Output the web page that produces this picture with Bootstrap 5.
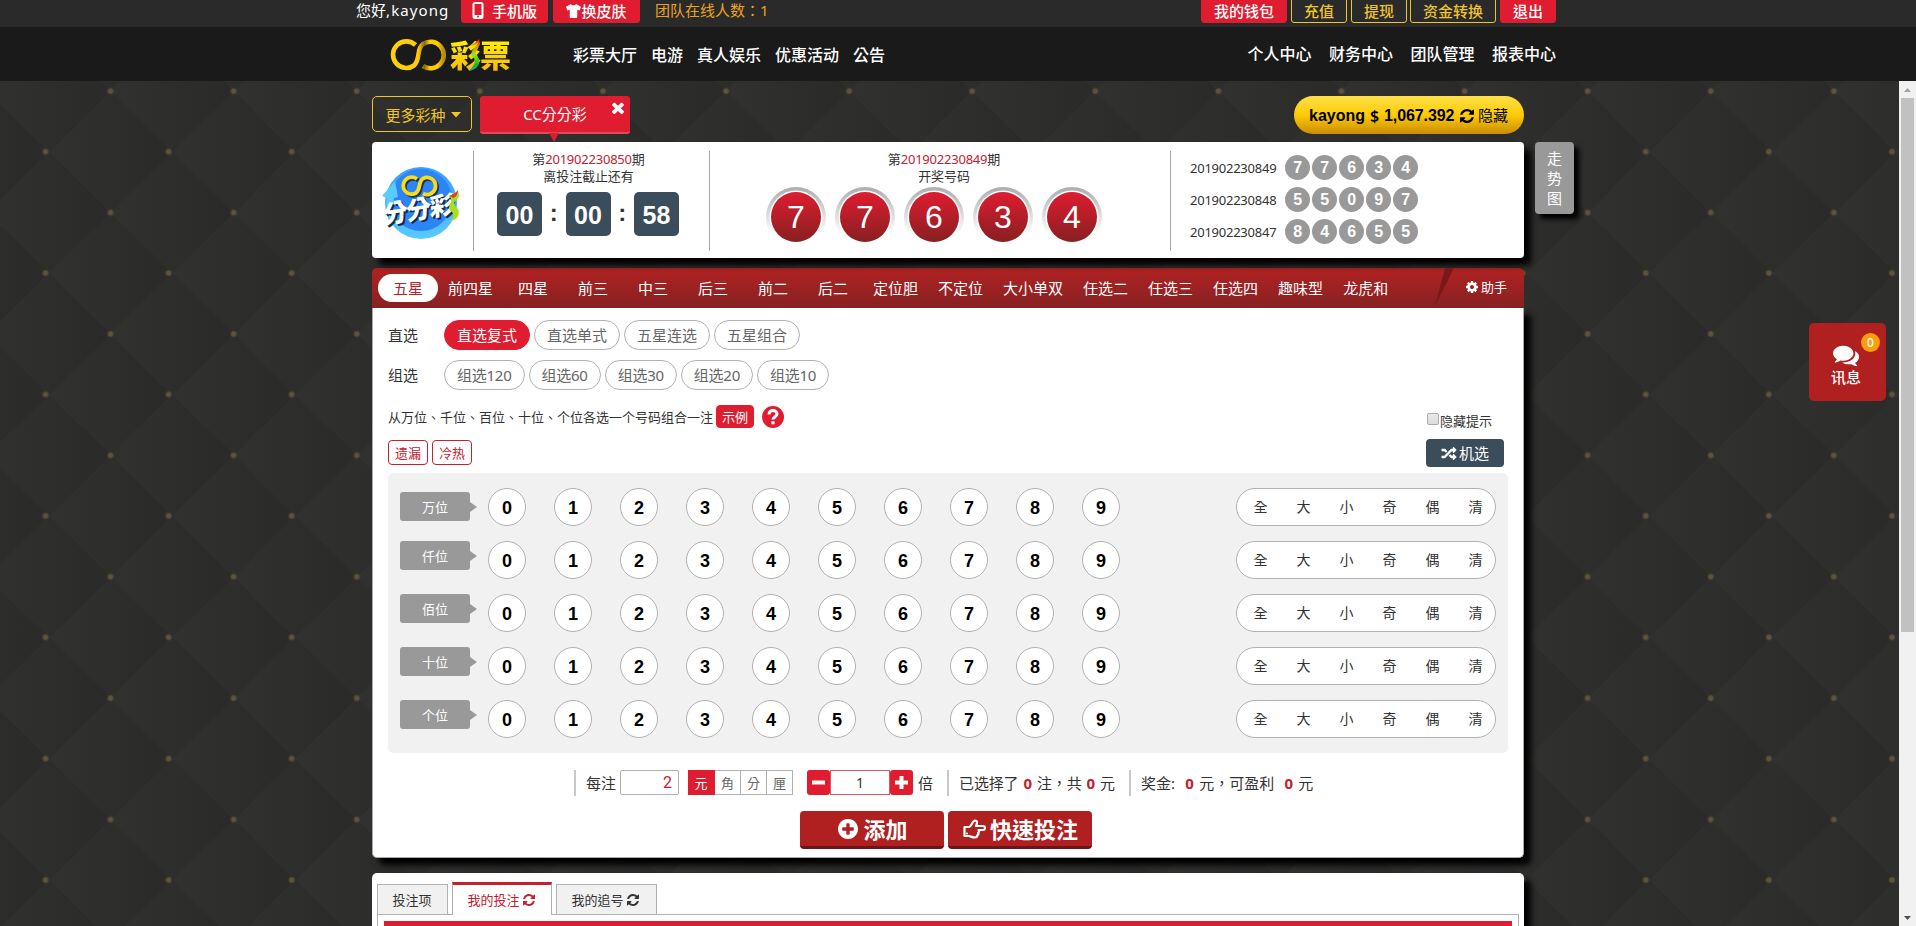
<!DOCTYPE html>
<html lang="zh-Hant">
<head>
<meta charset="utf-8">
<title>CC彩票</title>
<link href="https://cdn.jsdelivr.net/npm/bootstrap@5.3.0/dist/css/bootstrap.min.css" rel="stylesheet">
<style>
html,body{height:100%;overflow:hidden}
body{font-family:"Noto Sans","Noto Sans CJK TC",sans-serif;font-size:15px;line-height:20px;color:#333;background:#2d2d2b;letter-spacing:0}
svg{display:block;flex:none}
.arial{font-family:"Liberation Sans","Noto Sans CJK TC",sans-serif}
.btn{--bs-btn-line-height:20px;--bs-btn-font-size:15px;--bs-btn-padding-x:0;--bs-btn-padding-y:0;display:flex;align-items:center;justify-content:center;white-space:nowrap}
.topbar{height:27px;background:#2a2a2a;padding-left:356px}
.topbar .btn{height:30px;margin-top:-7px;border-radius:3px;font-weight:500;padding-top:5px}
.btn-crimson{background:#df1c30;border-color:#df1c30;color:#fff}
.btn-gold{border-color:#f0c52a;color:#f0c52a}
.mainnav{height:54px;background:#1a1a1a;padding:1px 360px 0 390px;color:#fff;font-size:16px;font-weight:500}
.brandtext{font-size:31px;line-height:32px;font-weight:900;color:#ffd21a;background:linear-gradient(#fff200,#f6b90e);-webkit-background-clip:text;background-clip:text;-webkit-text-fill-color:transparent;letter-spacing:-1px}
.stage{height:845px}
.quilt{background-color:#2d2d2b;overflow:hidden;
background-image:radial-gradient(circle,#5d543c 0 2px,#39342880 3.500px,#25252300 5px),radial-gradient(circle,#5d543c 0 2px,#39342880 3.500px,#25252300 5px),url("data:image/svg+xml,%3Csvg xmlns='http://www.w3.org/2000/svg' width='123' height='121' viewBox='0 0 123 121' preserveAspectRatio='none'%3E%3Cdefs%3E%3ClinearGradient id='a'%3E%3Cstop stop-color='%23313130'/%3E%3Cstop offset='1' stop-color='%232a2a29'/%3E%3C/linearGradient%3E%3Cpath id='d' d='M61.500 0L123 60.500 61.500 121 0 60.500z' fill='url(%23a)'/%3E%3C/defs%3E%3Crect width='123' height='121' fill='%232d2d2c'/%3E%3Cuse href='%23d'/%3E%3Cuse href='%23d' x='61.500' y='60.500'/%3E%3Cuse href='%23d' x='-61.500' y='60.500'/%3E%3Cuse href='%23d' x='61.500' y='-60.500'/%3E%3Cuse href='%23d' x='-61.500' y='-60.500'/%3E%3C/svg%3E");
background-size:123.1px 121.4px;background-position:49px -50.500px,-16px 10px,49px 10.200px}
.vscroll{width:17px;background:#f1f1f1}
.vthumb{width:13px;height:534px;background:#c1c1c1}
.wrapcol{width:1152px;margin-left:372px;padding-top:15px}
.more{width:100px;height:36px;border-radius:5px}
.gametab{width:150px;height:38px;background:#df1c30;border-bottom:2px solid #e04b5a;border-radius:3px;color:#fff;margin-left:8px}
.gametab .closex{position:absolute;right:6px;top:6px}
.gametab .tip{position:absolute;left:69px;top:37px}
.wallet{width:230px;height:38px;border-radius:19px;background:linear-gradient(#ffe04a,#fdcb05 50%,#c98d06);color:#000;font-weight:700;font-size:16px;padding-top:2px}
.shade{box-shadow:7px 7px 6px #000}
.panel1{height:116px;margin-top:8px;background:#fff;border-radius:4px;width:1152px}
.vline{border-left:1px solid #a8a8a8;margin-right:1px;height:100px;margin-top:9px}
.issue{font-size:13px;line-height:17px;letter-spacing:-.1px}
.issue b{font-weight:400;color:#c4202e;letter-spacing:-.22px}
.clock{width:45px;height:44px;background:#3b4c5b;color:#fff;border-radius:5px;font-size:25px;font-weight:700;line-height:46px}
.ball{width:60px;height:60px;border-radius:50%;background:linear-gradient(#adadad,#fff 80%);padding:5px;box-shadow:none}
.ball span{width:50px;height:50px;border-radius:50%;background:linear-gradient(#df1c30,#872021);color:#fff;font-size:32px;box-shadow:0 0 0 1.500px #fff}
.dot{width:25px;height:25px;border-radius:50%;background:#999;color:#fff;font-weight:700;font-size:16px}
.hist{font-size:13px;letter-spacing:-.24px;height:25px;margin-bottom:7px}
.trend{width:39px;height:72px;background:#999;color:#fff;border-radius:4px;padding-top:6px;text-align:center;margin-left:11px;box-shadow:5px 5px 5px #000}
.bar{height:40px;background:linear-gradient(#b12222,#872122);border-radius:5px 5px 0 0;padding-left:6px;color:#fff}
.bar .tabitem{min-width:60px;padding:0 10px;height:28px;display:flex;align-items:center;justify-content:center}
.bar .tabitem.active{background:#fff;color:#b8222e;border-radius:14px;padding:0}
.betting{height:550px;background:#fff;border:1px solid #aaa;border-top:0;border-radius:0 0 5px 5px;padding:12px 15px 0}
.kind{width:52px}
.pilltab{height:30px;border:1px solid #b1b1b1;border-radius:15px;padding:0 12px;color:#666;display:flex;align-items:center}
.pilltab.active{background:#df1c30;border-color:#df1c30;color:#fff}
.tight .pilltab{letter-spacing:-.25px}
.tiny{font-size:13px;letter-spacing:0}
.btn-line{border-color:#c4202e;color:#c4202e;border-radius:4px;width:40px;height:25px}
.board{width:1120px;height:280px;background:#f1f1f1;border-radius:5px;padding:15px 12px 0}
.digitrow{height:38px;margin-bottom:15px}
.place{width:70px;height:29px;border-radius:3px;background:#999;color:#fff;font-size:13px;margin-top:4px;position:relative}
.digitrow+.digitrow .place{margin-top:0}
.place::after{content:"";position:absolute;left:70px;top:10px;border:5px solid transparent;border-left:7px solid #999;border-right:0}
.num{width:38px;height:38px;border:1px solid #b1b1b1;border-radius:50%;background:#fff;color:#000;font-size:18px;font-weight:700;margin-right:28px;padding-top:1px}
.quick{width:260px;height:38px;border:1px solid #b1b1b1;border-radius:19px;background:#fff;font-size:14px;padding-left:2px}
.quick span{width:43px;flex:none;text-align:center}
.calc{height:27px;padding-left:186px}
.calc .sep{border-left:2px solid #c8c8c8;height:26px}
.calc .box{border:1px solid #b1b1b1;height:25px}
.calc em{font-style:normal;font-weight:700;color:#c4202e}
.unit{width:26px;border:1px solid #b1b1b1;border-left:0;height:25px;font-size:13px;color:#666}
.go{width:144px;height:38px!important;background:#b02020;border:0;border-bottom:3px solid #6c1416;border-radius:4px;color:#fff;font-size:22px;font-weight:700}
.orders{height:80px;margin-top:15px;background:#fff;border-radius:5px 5px 0 0;padding:9px 5px 0}
.otab{font-size:13px;height:30px;border:1px solid #b1b1b1;border-bottom:0;background:#f1f1f1;margin-right:4px}
.otab.active{height:33px;background:#fff;border-top:3px solid #c4202e;color:#c4202e;margin-bottom:-1px}
.obody{border:1px solid #b1b1b1;height:50px;padding:6px 6px 0}
.msg{position:absolute;left:1809px;top:323px;width:77px;height:78px;background:#b02020;border-radius:5px;color:#fff;font-weight:500;padding:22px 3px 0 0}
.msg .count{position:absolute;left:52px;top:10px;width:19px;height:19px;border-radius:50%;background:#ff9c0a;font-size:12px}
</style>
</head>
<body>
<svg width="0" height="0" class="position-absolute">
<symbol id="refresh" viewBox="0 0 1536 1536"><path fill="currentColor" d="M1511 928q0 5-1 7-64 268-268 434.500t-478 166.500q-146 0-282.500-55t-243.500-157l-129 129q-19 19-45 19t-45-19-19-45v-448q0-26 19-45t45-19h448q26 0 45 19t19 45-19 45l-137 137q71 66 161 102t187 36q134 0 250-65t186-179q11-17 53-117 8-23 30-23h192q13 0 22.500 9.500t9.500 22.500zm25-800v448q0 26-19 45t-45 19h-448q-26 0-45-19t-19-45 19-45l138-138q-148-137-349-137-134 0-250 65t-186 179q-11 17-53 117-8 23-30 23h-199q-13 0-22.500-9.500t-9.500-22.500v-7q65-268 270-434.500t480-166.500q146 0 284 55.500t245 156.500l130-129q19-19 45-19t45 19 19 45z"/></symbol>
</svg>
<header>
<div class="topbar d-flex overflow-hidden text-white">
  <div style="width:105px">您好<span style="letter-spacing:1.100px">,kayong</span></div>
  <a class="btn btn-crimson" style="width:87px"><svg width="12" height="17" viewBox="0 0 12 17" class="me-2"><rect x="1.500" y="1" width="9" height="15" rx="1.500" fill="none" stroke="#fff" stroke-width="2"/><path d="M2 13h8v3H2z" fill="#fff"/><circle cx="6" cy="14.500" r="1" fill="#df1c30"/></svg>手机版</a>
  <a class="btn btn-crimson" style="width:87px;margin-left:5px"><svg width="15" height="14" viewBox="0 0 640 512" preserveAspectRatio="none"><path fill="#fff" d="M631 96L436 0c-20 28-64 47-116 47S224 28 203 0L9 96c-8 4-11 14-7 22l57 114c4 8 14 11 21 7l57-27c11-5 23 3 23 14v254c0 18 14 32 32 32h256c18 0 32-14 32-32V226c0-12 12-19 23-14l57 27c8 4 17 1 21-7l57-114c4-8 1-18-7-22z"/></svg>换皮肤</a>
  <div style="margin-left:15px;color:#e9a31f;width:546px">团队在线人数：1</div>
  <a class="btn btn-crimson" style="width:86px">我的钱包</a>
  <a class="btn btn-gold" style="width:56px;margin-left:4px">充值</a>
  <a class="btn btn-gold" style="width:56px;margin-left:4px">提现</a>
  <a class="btn btn-gold" style="width:86px;margin-left:3px">资金转换</a>
  <a class="btn btn-crimson" style="width:56px;margin-left:4px">退出</a>
</div>
<nav class="mainnav d-flex align-items-center">
  <svg width="58" height="34" viewBox="0 0 58 34"><defs><linearGradient id="lg"><stop stop-color="#ffd00c"/><stop offset=".5" stop-color="#ffca0a"/><stop offset=".62" stop-color="#8a6909"/><stop offset=".72" stop-color="#ffc80a"/><stop offset=".88" stop-color="#ffca0a"/><stop offset="1" stop-color="#b78b08"/></linearGradient></defs><path d="M25.500 7A13.300 13.300 0 1 0 24 27.500C31 21 26 11 33 6A13.300 13.300 0 1 1 33 28" fill="none" stroke="url(#lg)" stroke-width="4.600"/></svg>
  <div class="brandtext position-relative" style="width:125px;padding-left:2px">彩票<svg class="position-absolute" style="left:20px;top:0" width="13" height="33" viewBox="0 0 13 33"><defs><linearGradient id="rb" x2="0" y2="1"><stop stop-color="#e71c12"/><stop offset=".25" stop-color="#f18b10"/><stop offset=".5" stop-color="#92e80a"/><stop offset=".8" stop-color="#18b52a"/><stop offset="1" stop-color="#189ad0"/></linearGradient></defs><path d="M11 0Q8 4 2 7q7-1 9-5Q9 7 4 12q-2 4 2 7 3 5-5 13 12-3 10-12-1-3-4-6 3-4 5-9z" fill="url(#rb)"/></svg></div>
  <div class="d-flex flex-fill" style="gap:14px;margin-top:1px"><span>彩票大厅</span><span>电游</span><span>真人娱乐</span><span>优惠活动</span><span>公告</span></div>
  <div class="d-flex" style="gap:17.500px;margin-top:-2px"><span>个人中心</span><span>财务中心</span><span>团队管理</span><span>报表中心</span></div>
</nav>
</header>
<div class="stage d-flex">
<main class="quilt flex-fill">
<div class="wrapcol">
  <div class="d-flex">
    <a class="btn btn-gold more" style="padding:2px 0 0 2px">更多彩种<svg width="10" height="6" viewBox="0 0 10 6" style="margin-left:5px"><path fill="#f5c518" d="M0 0h10L5 5.500z"/></svg></a>
    <div class="gametab position-relative d-flex align-items-center justify-content-center">CC分分彩
      <svg class="closex" width="12" height="12" viewBox="302 302 1188 1252" preserveAspectRatio="none"><path fill="#fff" d="M1490 1322q0 40-28 68l-136 136q-28 28-68 28t-68-28l-294-294-294 294q-28 28-68 28t-68-28l-136-136q-28-28-28-68t28-68l294-294-294-294q-28-28-28-68t28-68l136-136q28-28 68-28t68 28l294 294 294-294q28-28 68-28t68 28l136 136q28 28 28 68t-28 68l-294 294 294 294q28 28 28 68z"/></svg>
      <svg class="tip" width="10" height="9" viewBox="0 0 10 9"><path fill="#df1c30" d="M0 0h10L5 9z"/></svg></div>
    <div class="wallet arial ms-auto d-flex align-items-center" style="padding-left:15px"><span style="width:61px">kayong</span><span style="width:14px;font-family:'Noto Sans';font-weight:600">$</span><span style="width:76px;letter-spacing:-.1px">1,067.392</span><svg width="14" height="14" class="me-1"><use href="#refresh"/></svg><span style="font-weight:400;font-size:15px">隐藏</span></div>
  </div>
  <div class="d-flex" style="width:1220px">
  <section class="panel1 shade d-flex flex-shrink-0">
    <svg width="101" height="116" viewBox="0 0 101 116"><defs><linearGradient id="bl" x2="0" y2="1"><stop stop-color="#3aa0ff"/><stop offset=".5" stop-color="#4aaef8"/><stop offset="1" stop-color="#58ccff"/></linearGradient></defs><circle cx="49" cy="61" r="36" fill="url(#bl)"/><circle cx="49" cy="58" r="31" fill="#2d85f5"/><path d="M10 54l13-15 3 16-4 1q-2 12 4 20l-8 6q-5-12-3-26z" fill="#58ccff"/><g fill="none" transform="translate(0 1)"><path d="M45 36a8.500 8.500 0 1 0-1 14c5-4 2-11 7-14.500a8.500 8.500 0 1 1 0 15" stroke="#273241" stroke-width="4" transform="translate(1.500 1.500)"/><path d="M45 36a8.500 8.500 0 1 0-1 14c5-4 2-11 7-14.500a8.500 8.500 0 1 1 0 15" stroke="#f5dc1c" stroke-width="3.800"/></g><g transform="rotate(-9 49 66) skewX(-8)" font-family="Noto Sans CJK TC" font-weight="900" font-size="25"><text x="22" y="78" fill="#102a48" textLength="72">分分彩</text><text x="20" y="76" fill="#fff" textLength="72">分分彩</text></g><path d="M86 49q-4 4-9 5 4 3 1 8-3 5 3 9 1 6-4 9 13-4 9-13-6-5-3-8 6-4 3-10z" fill="#a8e01c"/><path d="M86 48q-4 5-9 6l5 2q4-3 4-8z" fill="#ee3a20"/></svg>
    <div class="vline"></div>
    <div class="text-center" style="width:234px;padding-top:9px;padding-right:7px"><div class="issue">第<b>201902230850</b>期<br>离投注截止还有</div>
      <div class="d-flex justify-content-center arial" style="margin-top:7px;padding-right:1px;line-height:42px;font-size:24px;font-weight:700"><div class="clock">00</div><span style="width:23.500px">:</span><div class="clock">00</div><span style="width:23.500px">:</span><div class="clock">58</div></div></div>
    <div class="vline"></div>
    <div class="text-center" style="width:459px;padding-top:9px"><div class="issue" style="padding-left:7px">第<b>201902230849</b>期<br>开奖号码</div>
      <div class="d-flex justify-content-center arial" style="gap:9px;margin-top:2px;padding-right:13px" id="balls"></div></div>
    <div class="vline"></div>
    <div style="padding:13px 0 0 18px" id="hist"></div>
  </section>
  <div class="trend" style="margin-top:8px">走<br>势<br>图</div>
  </div>
  <div style="margin-top:10px">
  <section class="bar d-flex align-items-center" style="padding-bottom:1px">
    <span class="tabitem active">五星</span><span class="tabitem">前四星</span><span class="tabitem">四星</span><span class="tabitem">前三</span><span class="tabitem">中三</span><span class="tabitem">后三</span><span class="tabitem">前二</span><span class="tabitem">后二</span><span class="tabitem">定位胆</span><span class="tabitem">不定位</span><span class="tabitem">大小单双</span><span class="tabitem">任选二</span><span class="tabitem">任选三</span><span class="tabitem">任选四</span><span class="tabitem">趣味型</span><span class="tabitem">龙虎和</span>
    <svg class="ms-auto" width="20" height="39" viewBox="0 0 20 39"><path fill="#781819" d="M11 0h9L1 38z"/></svg>
    <div class="d-flex align-items-center tiny" style="width:70px;padding-left:12px;padding-bottom:2px"><svg width="12" height="12" viewBox="128 128 1536 1536"><path fill="#fff" d="M1152 896q0-106-75-181t-181-75-181 75-75 181 75 181 181 75 181-75 75-181zm512-109v222q0 12-8 23t-20 13l-185 28q-19 54-39 91 35 50 107 138 10 12 10 25t-9 23q-27 37-99 108t-94 71q-12 0-26-9l-138-108q-44 23-91 38-16 136-29 186-7 28-36 28h-222q-14 0-24.500-8.500t-11.500-21.500l-28-184q-49-16-90-37l-141 107q-10 9-25 9-14 0-25-11-126-114-165-168-7-10-7-23 0-12 8-23 15-21 51-66.500t54-70.500q-27-50-41-99l-183-27q-13-2-21-12.500t-8-23.500v-222q0-12 8-23t19-13l186-28q14-46 39-92-40-57-107-138-10-12-10-24 0-10 9-23 26-36 98.500-107.500t94.500-71.500q13 0 26 10l138 107q44-23 91-38 16-136 29-186 7-28 36-28h222q14 0 24.500 8.500t11.500 21.500l28 184q49 16 90 37l142-107q9-9 24-9 13 0 25 10 129 119 165 170 7 8 7 22 0 12-8 23-15 21-51 66.500t-54 70.500q26 50 41 98l183 28q13 2 21 12.500t8 23.500z"/></svg><span style="margin-left:3px">助手</span></div>
  </section>
  <section class="betting shade">
    <div class="d-flex align-items-center gap-1" style="margin-bottom:10px"><span class="kind">直选</span><span class="pilltab active">直选复式</span><span class="pilltab">直选单式</span><span class="pilltab">五星连选</span><span class="pilltab">五星组合</span></div>
    <div class="d-flex align-items-center gap-1 tight"><span class="kind">组选</span><span class="pilltab">组选120</span><span class="pilltab">组选60</span><span class="pilltab">组选30</span><span class="pilltab">组选20</span><span class="pilltab">组选10</span></div>
    <div class="d-flex tiny align-items-center" style="margin-top:14px;height:25px"><span style="width:328px">从万位、千位、百位、十位、个位各选一个号码组合一注</span><a class="btn btn-crimson tiny" style="width:38px;height:23px;border-radius:4px">示例</a><svg width="22" height="22" viewBox="0 0 22 22" style="margin-left:8px"><circle cx="11" cy="11" r="11" fill="#df1c30"/><path d="M7 8.500C7 3 15 3.500 15 8c0 3-4 3-4 5.500" fill="none" stroke="#fff" stroke-width="3"/><path d="M9.400 15.300h3.200v3H9.400z" fill="#fff"/></svg>
      <span style="margin-left:643px;margin-top:4px;width:12px;height:12px;border:1px solid #aaa;border-radius:2px;background:linear-gradient(#e8e8e8,#ddd)"></span><span style="margin:8px 0 0 1px">隐藏提示</span></div>
    <div class="d-flex" style="margin-top:10px;height:34px;padding-top:1px"><a class="btn btn-line tiny">遗漏</a><a class="btn btn-line tiny ms-1">冷热</a><a class="btn ms-auto text-white" style="width:78px;height:28px;margin-top:-1px;margin-right:4px;background:#3b4c5b;border-radius:4px"><svg width="16" height="15" viewBox="0 0 512 512"><path fill="#fff" d="M505 359c9 9 9 25 0 34l-80 80c-15 15-41 4-41-17V416h-59c-3 0-6-1-9-4l-70-75 53-58 53 57h32v-40c0-21 26-32 41-17l80 80zM12 176h84l53 57 53-58-70-75c-3-3-6-4-9-4H12c-7 0-12 5-12 12v56c0 7 5 12 12 12zm372 0v40c0 21 26 32 41 17l80-80c9-9 9-25 0-34l-80-80c-15-15-41-4-41 17V96h-59c-3 0-6 1-9 4L96 336H12c-7 0-12 5-12 12v56c0 7 5 12 12 12h111c3 0 6-1 9-4l220-236h32z"/></svg><span style="margin-left:2px">机选</span></a></div>
    <div class="board" id="board"></div>
    <div class="calc d-flex align-items-center" style="margin-top:16px"><div class="sep"></div><span style="margin:0 4px 0 10px">每注</span><div class="box text-end" style="width:59px;padding-right:6px;border-radius:2px;color:#c4202e;line-height:24px;font-size:16px;font-family:Roboto">2</div>
      <span class="unit d-flex align-items-center justify-content-center" style="margin-left:9px;width:27px;background:#df1c30;border-color:#df1c30;color:#fff">元</span><span class="unit d-flex align-items-center justify-content-center">角</span><span class="unit d-flex align-items-center justify-content-center">分</span><span class="unit d-flex align-items-center justify-content-center">厘</span>
      <svg width="23" height="25" style="margin-left:14px"><rect width="23" height="25" rx="3" fill="#df1c30"/><path d="M5 12.500h13" stroke="#fff" stroke-width="4"/></svg><div class="box text-center" style="width:60px;border-color:#d75863;line-height:24px;font-size:14px">1</div><svg width="23" height="25"><rect width="23" height="25" rx="3" fill="#df1c30"/><path d="M5 12.500h13M11.500 6v13" stroke="#fff" stroke-width="4"/></svg><span style="margin:0 14px 0 5px">倍</span>
      <div class="sep"></div><span style="margin-left:10px;white-space:pre;word-spacing:1.300px;letter-spacing:-.15px">已选择了 <em>0</em> 注，共 <em>0</em> 元</span><div class="sep" style="margin:0 10px 0 14px"></div><span style="white-space:pre;word-spacing:1.300px">奖金:  <em>0</em> 元，可盈利  <em>0</em> 元</span></div>
    <div class="d-flex justify-content-center gap-1" style="margin-top:15px;padding-right:4px"><a class="btn go"><svg width="20" height="20" viewBox="128 128 1536 1536" style="margin:0 5px 0 2px"><path fill="#fff" d="M1344 960v-128q0-26-19-45t-45-19h-256v-256q0-26-19-45t-45-19h-128q-26 0-45 19t-19 45v256h-256q-26 0-45 19t-19 45v128q0 26 19 45t45 19h256v256q0 26 19 45t45 19h128q26 0 45-19t19-45v-256h256q26 0 45-19t19-45zm320-64q0 209-103 385.500t-279.500 279.500-385.500 103-385.500-103-279.500-279.500-103-385.500 103-385.500 279.500-279.500 385.500-103 385.500 103 279.500 279.500 103 385.500z"/></svg>添加</a><a class="btn go"><svg width="23" height="20" viewBox="0 0 23 20" style="margin:0 4px 0 1px"><path d="M1.500 8h4.500c3-1 3-6 6-6.500 3 0 2 3.500 1 5.500h7a2 2 0 0 1 0 4h-4.500c1 1 .8 2-.3 2.700.6 1.300 0 2.300-1 2.600 0 1.700-1 2.200-2.200 2.200-3 0-4-1-6-1.500H1.500z" fill="none" stroke="#fff" stroke-width="2.200" stroke-linejoin="round"/><circle cx="4" cy="14.500" r="1" fill="#fff"/></svg>快速投注</a></div>
  </section>
  </div>
  <section class="orders shade">
    <div class="d-flex align-items-end" style="height:32px"><div class="otab d-flex align-items-center justify-content-center" style="width:71px;padding-right:1px">投注项</div><div class="otab active d-flex align-items-center justify-content-center" style="width:100px;padding-right:2px">我的投注<svg width="12" height="12" style="margin-left:3px"><use href="#refresh"/></svg></div><div class="otab d-flex align-items-center justify-content-center" style="width:101px;padding-right:3px">我的追号<svg width="12" height="12" style="margin-left:3px"><use href="#refresh"/></svg></div></div>
    <div class="obody"><div style="height:30px;background:#df1c30"></div></div>
  </section>
</div>
</main>
<div class="vscroll d-flex flex-column align-items-center"><svg width="17" height="17" viewBox="0 0 17 17"><path fill="#a3a3a3" d="M5 11h7L8.500 7z"/></svg><div class="vthumb"></div><svg class="mt-auto" width="17" height="17" viewBox="0 0 17 17"><path fill="#505050" d="M5 7h7l-3.500 4z"/></svg></div>
</div>
<aside class="msg d-flex flex-column align-items-center"><svg width="26" height="22" viewBox="0 256 1792 1408"><path fill="#fff" d="M1408 768q0 139-94 257t-256.500 186.500-353.500 68.500q-86 0-176-16-124 88-278 128-36 9-86 16h-3q-11 0-20.500-8t-11.500-21q-1-3-1-6.500t.5-6.500 2-6l2.500-5 3.500-5.500 4-5 4.500-5 4-4.500q5-6 23-25t26-29.500 22.500-29 25-38.500 20.500-44q-124-72-195-177t-71-224q0-139 94-257t256.500-186.500 353.500-68.500 353.500 68.500 256.500 186.500 94 257zm384 256q0 120-71 224.500t-195 176.500q10 24 20.500 44t25 38.500 22.500 29 26 29.500 23 25q1 1 4 4.500t4.500 5 4 5 3.500 5.500l2.500 5 2 6 .5 6.500-1 6.500q-3 14-13 22t-22 7q-50-7-86-16-154-40-278-128-90 16-176 16-271 0-472-132 58 4 88 4 161 0 309-45t264-129q125-92 192-212t67-254q0-77-23-152 129 71 204 178t75 230z"/></svg>讯息<span class="count d-flex align-items-center justify-content-center">0</span></aside>
<script>
const center = 'd-flex align-items-center justify-content-center';
document.getElementById('balls').innerHTML = [...'77634'].map(n => `<div class="ball"><span class="${center}">${n}</span></div>`).join('');
document.getElementById('hist').innerHTML = [['201902230849','77634'],['201902230848','55097'],['201902230847','84655']].map(([id, ns]) =>
  `<div class="hist d-flex align-items-center"><span style="width:95px">${id}</span><div class="d-flex arial" style="gap:2px">${[...ns].map(n => `<b class="dot ${center}">${n}</b>`).join('')}</div></div>`).join('');
document.getElementById('board').innerHTML = ['万位','仟位','佰位','十位','个位'].map(p =>
  `<div class="digitrow d-flex"><div class="place ${center}">${p}</div><div class="d-flex arial" style="margin-left:18px">${[...'0123456789'].map(n => `<span class="num ${center}">${n}</span>`).join('')}</div><div class="quick ms-auto d-flex align-items-center">${[...'全大小奇偶清'].map(c => `<span>${c}</span>`).join('')}</div></div>`).join('');
</script>
<script src="https://cdn.jsdelivr.net/npm/bootstrap@5.3.0/dist/js/bootstrap.bundle.min.js"></script>
</body>
</html>
